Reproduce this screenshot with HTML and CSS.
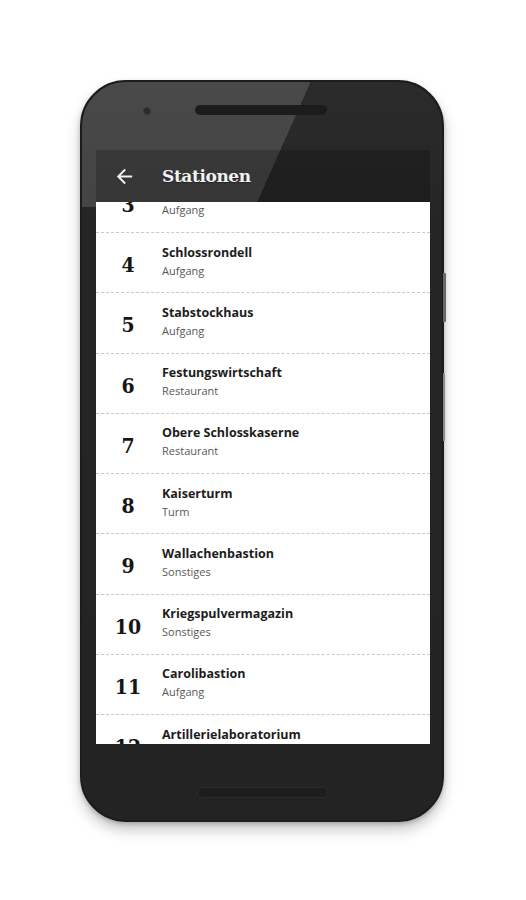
FILE: index.html
```html
<!DOCTYPE html>
<html lang="de">
<head>
<meta charset="utf-8">
<title>Stationen</title>
<link rel="stylesheet" href="styles.css">
</head>
<body>
<div class="stage">
  <div class="phone">
    <span class="side-btn side-btn--power"></span>
    <span class="side-btn side-btn--volume"></span>
    <div class="bezel-top">
      <span class="camera"></span>
      <span class="speaker"></span>
    </div>
    <div class="screen">
      <div class="toolbar">
        <svg class="back" viewBox="0 0 24 24" width="23" height="23" aria-hidden="true"><path d="M20 11H7.83l5.59-5.59L12 4l-8 8 8 8 1.41-1.41L7.83 13H20v-2z" fill="#f2f2f2"/></svg>
        <h1 class="title">Stationen</h1>
      </div>
      <div class="list">
        <ul class="rows">
          <li class="row"><span class="num">3</span><div class="text"><span class="name"></span><span class="type">Aufgang</span></div></li>
          <li class="row"><span class="num">4</span><div class="text"><span class="name">Schlossrondell</span><span class="type">Aufgang</span></div></li>
          <li class="row"><span class="num">5</span><div class="text"><span class="name">Stabstockhaus</span><span class="type">Aufgang</span></div></li>
          <li class="row"><span class="num">6</span><div class="text"><span class="name">Festungswirtschaft</span><span class="type">Restaurant</span></div></li>
          <li class="row"><span class="num">7</span><div class="text"><span class="name">Obere Schlosskaserne</span><span class="type">Restaurant</span></div></li>
          <li class="row"><span class="num">8</span><div class="text"><span class="name">Kaiserturm</span><span class="type">Turm</span></div></li>
          <li class="row"><span class="num">9</span><div class="text"><span class="name">Wallachenbastion</span><span class="type">Sonstiges</span></div></li>
          <li class="row"><span class="num">10</span><div class="text"><span class="name">Kriegspulvermagazin</span><span class="type">Sonstiges</span></div></li>
          <li class="row"><span class="num">11</span><div class="text"><span class="name">Carolibastion</span><span class="type">Aufgang</span></div></li>
          <li class="row"><span class="num">12</span><div class="text"><span class="name">Artillerielaboratorium</span><span class="type"></span></div></li>
        </ul>
      </div>
    </div>
    <div class="bezel-bottom">
      <span class="speaker speaker--bottom"></span>
    </div>
  </div>
</div>
</body>
</html>
```
FILE: styles.css
```css
* { box-sizing: border-box; }
html, body { margin: 0; padding: 0; background: #ffffff; }

.stage {
  width: 526px;
  height: 900px;
  padding: 80px 0 0 80px;
}

.phone {
  position: relative;
  width: 364px;
  height: 742px;
  border: 2px solid #1c1c1c;
  border-radius: 46px;
  background:
    linear-gradient(114deg, rgba(255,255,255,0.14) 0 55%, rgba(255,255,255,0) 55%) top left / 100% 125px no-repeat,
    linear-gradient(180deg, #2b2b2b 0, #252525 140px, #232323 100%);
  display: flex;
  flex-direction: column;
  box-shadow: 0 8px 14px rgba(0,0,0,0.22), 0 2px 4px rgba(0,0,0,0.2);
}

.side-btn {
  position: absolute;
  right: -4px;
  width: 3px;
  background: #6a6a6a;
  border-radius: 0 1px 1px 0;
}
.side-btn--power { top: 191px; height: 49px; }
.side-btn--volume { top: 291px; height: 68px; background: #8a8a8a; width: 2px; right: -3px; }

.bezel-top {
  height: 68px;
  display: flex;
  align-items: flex-start;
  padding-top: 23px;
  flex: none;
}

.camera {
  width: 8px;
  height: 8px;
  border-radius: 50%;
  margin-left: 61px;
  margin-top: 2px;
  background: radial-gradient(circle, #2a2a2a 0 40%, #3a3a3a 70%, #454545 100%);
}

.speaker {
  width: 132px;
  height: 10px;
  margin-left: 44px;
  border-radius: 5px;
  background: #1c1c1c;
}

.screen {
  margin-left: 14px;
  width: 334px;
  height: 594px;
  flex: none;
  display: flex;
  flex-direction: column;
  overflow: hidden;
}

.toolbar {
  height: 52px;
  flex: none;
  display: flex;
  align-items: center;
  padding-left: 17px;
  background: rgba(0,0,0,0.2);
}

.back { display: block; flex: none; }

.title {
  margin: 0 0 0 26px;
  font-family: "DejaVu Serif", "Liberation Serif", serif;
  font-weight: bold;
  font-size: 17px;
  letter-spacing: -0.4px;
  color: #f2f2f2;
  text-shadow: 0 1px 1px rgba(0,0,0,0.4);
}

.list {
  flex: 1;
  background: #ffffff;
  overflow: hidden;
}

.rows {
  list-style: none;
  margin: -29.25px 0 0 0;
  padding: 0;
}

.row {
  height: 60.25px;
  display: flex;
  align-items: center;
  border-bottom: 1px dashed #c9c9c9;
}

.num {
  width: 64px;
  margin-right: 2px;
  text-align: center;
  font-family: "DejaVu Serif Condensed", "DejaVu Serif", "Liberation Serif", serif;
  font-stretch: condensed;
  font-weight: bold;
  font-size: 21px;
  color: #161616;
  padding-top: 4px;
  flex: none;
}

.text {
  display: flex;
  flex-direction: column;
  padding-bottom: 2px;
}

.name {
  display: block;
  height: 18px;
  font-family: "Open Sans", "Liberation Sans", sans-serif;
  font-weight: 700;
  font-size: 12.5px;
  line-height: 18px;
  color: #1c1c1c;
}

.type {
  display: block;
  height: 18px;
  font-family: "Open Sans", "Liberation Sans", sans-serif;
  font-size: 11px;
  line-height: 18px;
  color: #585858;
}

.bezel-bottom {
  flex: 1;
  padding-top: 43px;
}

.speaker--bottom {
  display: block;
  margin-left: 115px;
  width: 131px;
  height: 11px;
  background: #1d1d1d;
  border: 1px solid #2c2c2c;
}
```
